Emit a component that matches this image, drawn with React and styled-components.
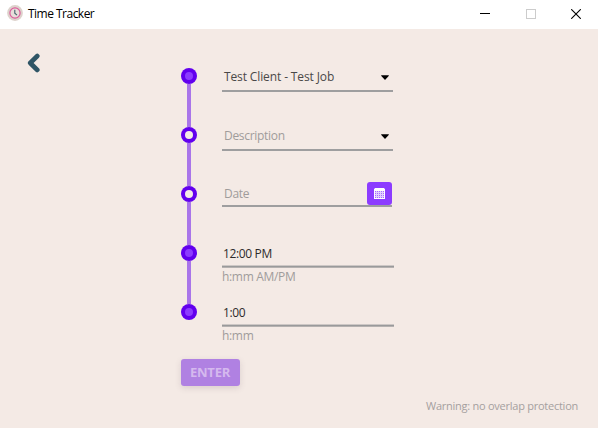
import React from "react";
import styled, { createGlobalStyle } from "styled-components";

const GlobalStyle = createGlobalStyle`
  * { box-sizing: border-box; }
  body {
    margin: 0;
    background: #f4eae5;
    font-family: "Open Sans", "Noto Sans", sans-serif;
    font-size: 12px;
    overflow: hidden;
  }
`;

const Window = styled.div`
  width: 598px;
  height: 428px;
  display: flex;
  flex-direction: column;
  background: #f4eae5;
`;

const TitleBar = styled.header`
  display: flex;
  align-items: center;
  height: 29px;
  flex: none;
  padding-left: 7px;
  background: #fff;
`;

const AppIcon = styled.svg`
  display: block;
  margin-bottom: 3px;
`;

const Title = styled.h1`
  margin: 0 auto 0 5px;
  padding-bottom: 1px;
  font-size: 12px;
  font-weight: 400;
  line-height: 16px;
  letter-spacing: -0.52px;
  color: #000;
`;

const WindowButton = styled.button`
  display: flex;
  align-items: center;
  justify-content: center;
  width: 45.5px;
  height: 27px;
  margin-bottom: 2px;
  padding: 0 0 0 2px;
  border: 0;
  background: none;
`;

const Content = styled.main`
  display: grid;
  grid-template-columns: 181px 1fr;
  grid-template-rows: 362px 1fr;
  flex: 1;
`;

const BackButton = styled.button`
  display: block;
  width: 14px;
  height: 20px;
  margin: 24px 0 0 27px;
  padding: 0;
  border: 0;
  background: none;
  svg { display: block; }
`;

const Form = styled.form`
  padding-top: 39px;
`;

const Step = styled.div`
  display: flex;
  gap: 25px;
  height: ${(p) => (p.$last ? 47 : 59)}px;
`;

const Rail = styled.div`
  display: flex;
  flex-direction: column;
  align-items: center;
  width: 16px;
  flex: none;
`;

const Dot = styled.span`
  display: flex;
  align-items: center;
  justify-content: center;
  width: 16px;
  height: 16px;
  flex: none;
  border-radius: 50%;
  background: #6200ee;
  &::after {
    content: "";
    width: 8px;
    height: 8px;
    border-radius: 50%;
    background: ${(p) => (p.$filled ? "#8c3cff" : "#f4eae5")};
  }
`;

const Connector = styled.span`
  width: 4px;
  height: 43px;
  background: #a975e9;
`;

const Field = styled.div`
  width: ${(p) => p.$width}px;
`;

const Control = styled.div`
  display: flex;
  align-items: center;
  justify-content: space-between;
  height: ${(p) => p.$height}px;
  padding-left: 2px;
  padding-right: ${(p) => p.$inset || 0}px;
  border-bottom: 2px solid #9e9e9f;
`;

const InputBox = styled.div`
  height: 23px;
  padding-left: 1px;
  border-bottom: 1px solid #b5b1b0;
  box-shadow: inset 0 -1px #999a9b, inset 0 -2px #cdc7c5;
`;

const Value = styled.span`
  display: block;
  line-height: 18px;
  font-size: 12px;
  white-space: nowrap;
  margin-bottom: ${(p) => p.$lift || 0}px;
  letter-spacing: ${(p) => p.$tracking || 0}px;
  color: ${(p) => (p.$muted ? "#a09c9b" : p.$strong ? "#2d2b2b" : "#4a4848")};
`;

const Caret = styled.svg`
  display: block;
  margin-bottom: 4px;
`;

const Helper = styled.span`
  display: block;
  line-height: 18px;
  white-space: nowrap;
  letter-spacing: -0.32px;
  color: #a09c9b;
`;

const CalendarButton = styled.button`
  display: flex;
  align-items: center;
  justify-content: center;
  width: 25px;
  height: 23px;
  margin-top: -4px;
  padding: 0;
  border: 0;
  border-radius: 3px;
  background: #8c3cff;
`;

const EnterButton = styled.button`
  display: flex;
  align-items: center;
  justify-content: center;
  width: 59px;
  height: 27px;
  margin-top: 8px;
  padding: 0 1px 2px 0;
  border: 0;
  border-radius: 3px;
  background: #b081e2;
  box-shadow: 0 2px 6px rgba(90, 60, 90, 0.16);
  color: #d5b9ee;
  font: 700 13px "Open Sans", sans-serif;
  letter-spacing: -0.2px;
`;

const Warning = styled.footer`
  grid-column: 1 / -1;
  padding: 6px 20px 0 0;
  text-align: right;
  font-size: 11px;
  line-height: 18px;
  letter-spacing: -0.25px;
  color: #a5a09f;
`;

function ClockIcon() {
  return (
    <AppIcon width="16" height="16" viewBox="0 0 16 16" fill="none">
      <circle cx="8" cy="8" r="7.9" fill="#ddd2cc" />
      <circle cx="8" cy="8" r="5.1" fill="#e8ddda" stroke="#dc5c9c" strokeWidth="1.2" />
      <path d="M7.8 4.8v3.4l2.2 2" stroke="#45606c" strokeWidth="1.1" />
    </AppIcon>
  );
}

function DownCaret() {
  return (
    <Caret width="8" height="5" viewBox="0 0 8 5">
      <path d="M.6.3h6.8c.5 0 .6.5.3.8L4.5 4.4a.7.7 0 0 1-1 0L.3 1.1C0 .8.1.3.6.3z" fill="#000" />
    </Caret>
  );
}

function CalendarIcon() {
  const cells = [];
  for (let r = 0; r < 4; r++)
    for (let c = 0; c < 5; c++)
      cells.push(<rect key={`${r}-${c}`} x={1 + c * 2} y={3 + r * 2} width="1" height="1" />);
  return (
    <svg width="11" height="11" viewBox="0 0 11 11" shapeRendering="crispEdges">
      <path d="M0 0h11v11H0z" fill="#fff" />
      <path d="M1 3h9v7H1z" fill="#e2cfff" />
      <path d="M0 0h1v1H0zM10 0h1v1h-1z" fill="#b98aff" />
      <g fill="#a66cff">{cells}</g>
    </svg>
  );
}

function TimelineStep({ filled, last, children }) {
  return (
    <Step $last={last}>
      <Rail>
        <Dot $filled={filled} />
        {!last && <Connector />}
      </Rail>
      {children}
    </Step>
  );
}

export default function App() {
  return (
    <Window>
      <GlobalStyle />
      <TitleBar>
        <ClockIcon />
        <Title>Time Tracker</Title>
        <WindowButton aria-label="Minimize">
          <svg width="10" height="1" shapeRendering="crispEdges"><path d="M0 0h10v1H0z" /></svg>
        </WindowButton>
        <WindowButton aria-label="Maximize">
          <svg width="10" height="10" shapeRendering="crispEdges">
            <path d="M.5.5h9v9h-9z" fill="none" stroke="#ccc" />
          </svg>
        </WindowButton>
        <WindowButton aria-label="Close">
          <svg width="10" height="10"><path d="M.2.2l9.6 9.6M9.8.2.2 9.8" stroke="#000" strokeWidth="1.1" /></svg>
        </WindowButton>
      </TitleBar>
      <Content>
        <BackButton aria-label="Back">
          <svg width="14" height="20" viewBox="0 0 14 20">
            <path d="M10.3 3 3.2 10l7.1 7" fill="none" stroke="#2f5566" strokeWidth="4.6" strokeLinecap="round" strokeLinejoin="round" />
          </svg>
        </BackButton>
        <Form>
          <TimelineStep filled>
            <Field $width={171}>
              <Control $height={24} $inset={4}>
                <Value $lift={4} $tracking={-0.12}>Test Client - Test Job</Value>
                <DownCaret />
              </Control>
            </Field>
          </TimelineStep>
          <TimelineStep>
            <Field $width={171}>
              <Control $height={24} $inset={4}>
                <Value $lift={4} $muted $tracking={-0.3}>Description</Value>
                <DownCaret />
              </Control>
            </Field>
          </TimelineStep>
          <TimelineStep>
            <Field $width={170}>
              <Control $height={21}>
                <Value $lift={4} $muted $tracking={-0.3}>Date</Value>
                <CalendarButton type="button" aria-label="Pick date"><CalendarIcon /></CalendarButton>
              </Control>
            </Field>
          </TimelineStep>
          <TimelineStep filled>
            <Field $width={172}>
              <InputBox><Value $strong $tracking={-0.35}>12:00 PM</Value></InputBox>
              <Helper>h:mm AM/PM</Helper>
            </Field>
          </TimelineStep>
          <TimelineStep filled last>
            <Field $width={172}>
              <InputBox><Value $strong $tracking={-0.35}>1:00</Value></InputBox>
              <Helper>h:mm</Helper>
            </Field>
          </TimelineStep>
          <EnterButton type="button">ENTER</EnterButton>
        </Form>
        <Warning>Warning: no overlap protection</Warning>
      </Content>
    </Window>
  );
}
